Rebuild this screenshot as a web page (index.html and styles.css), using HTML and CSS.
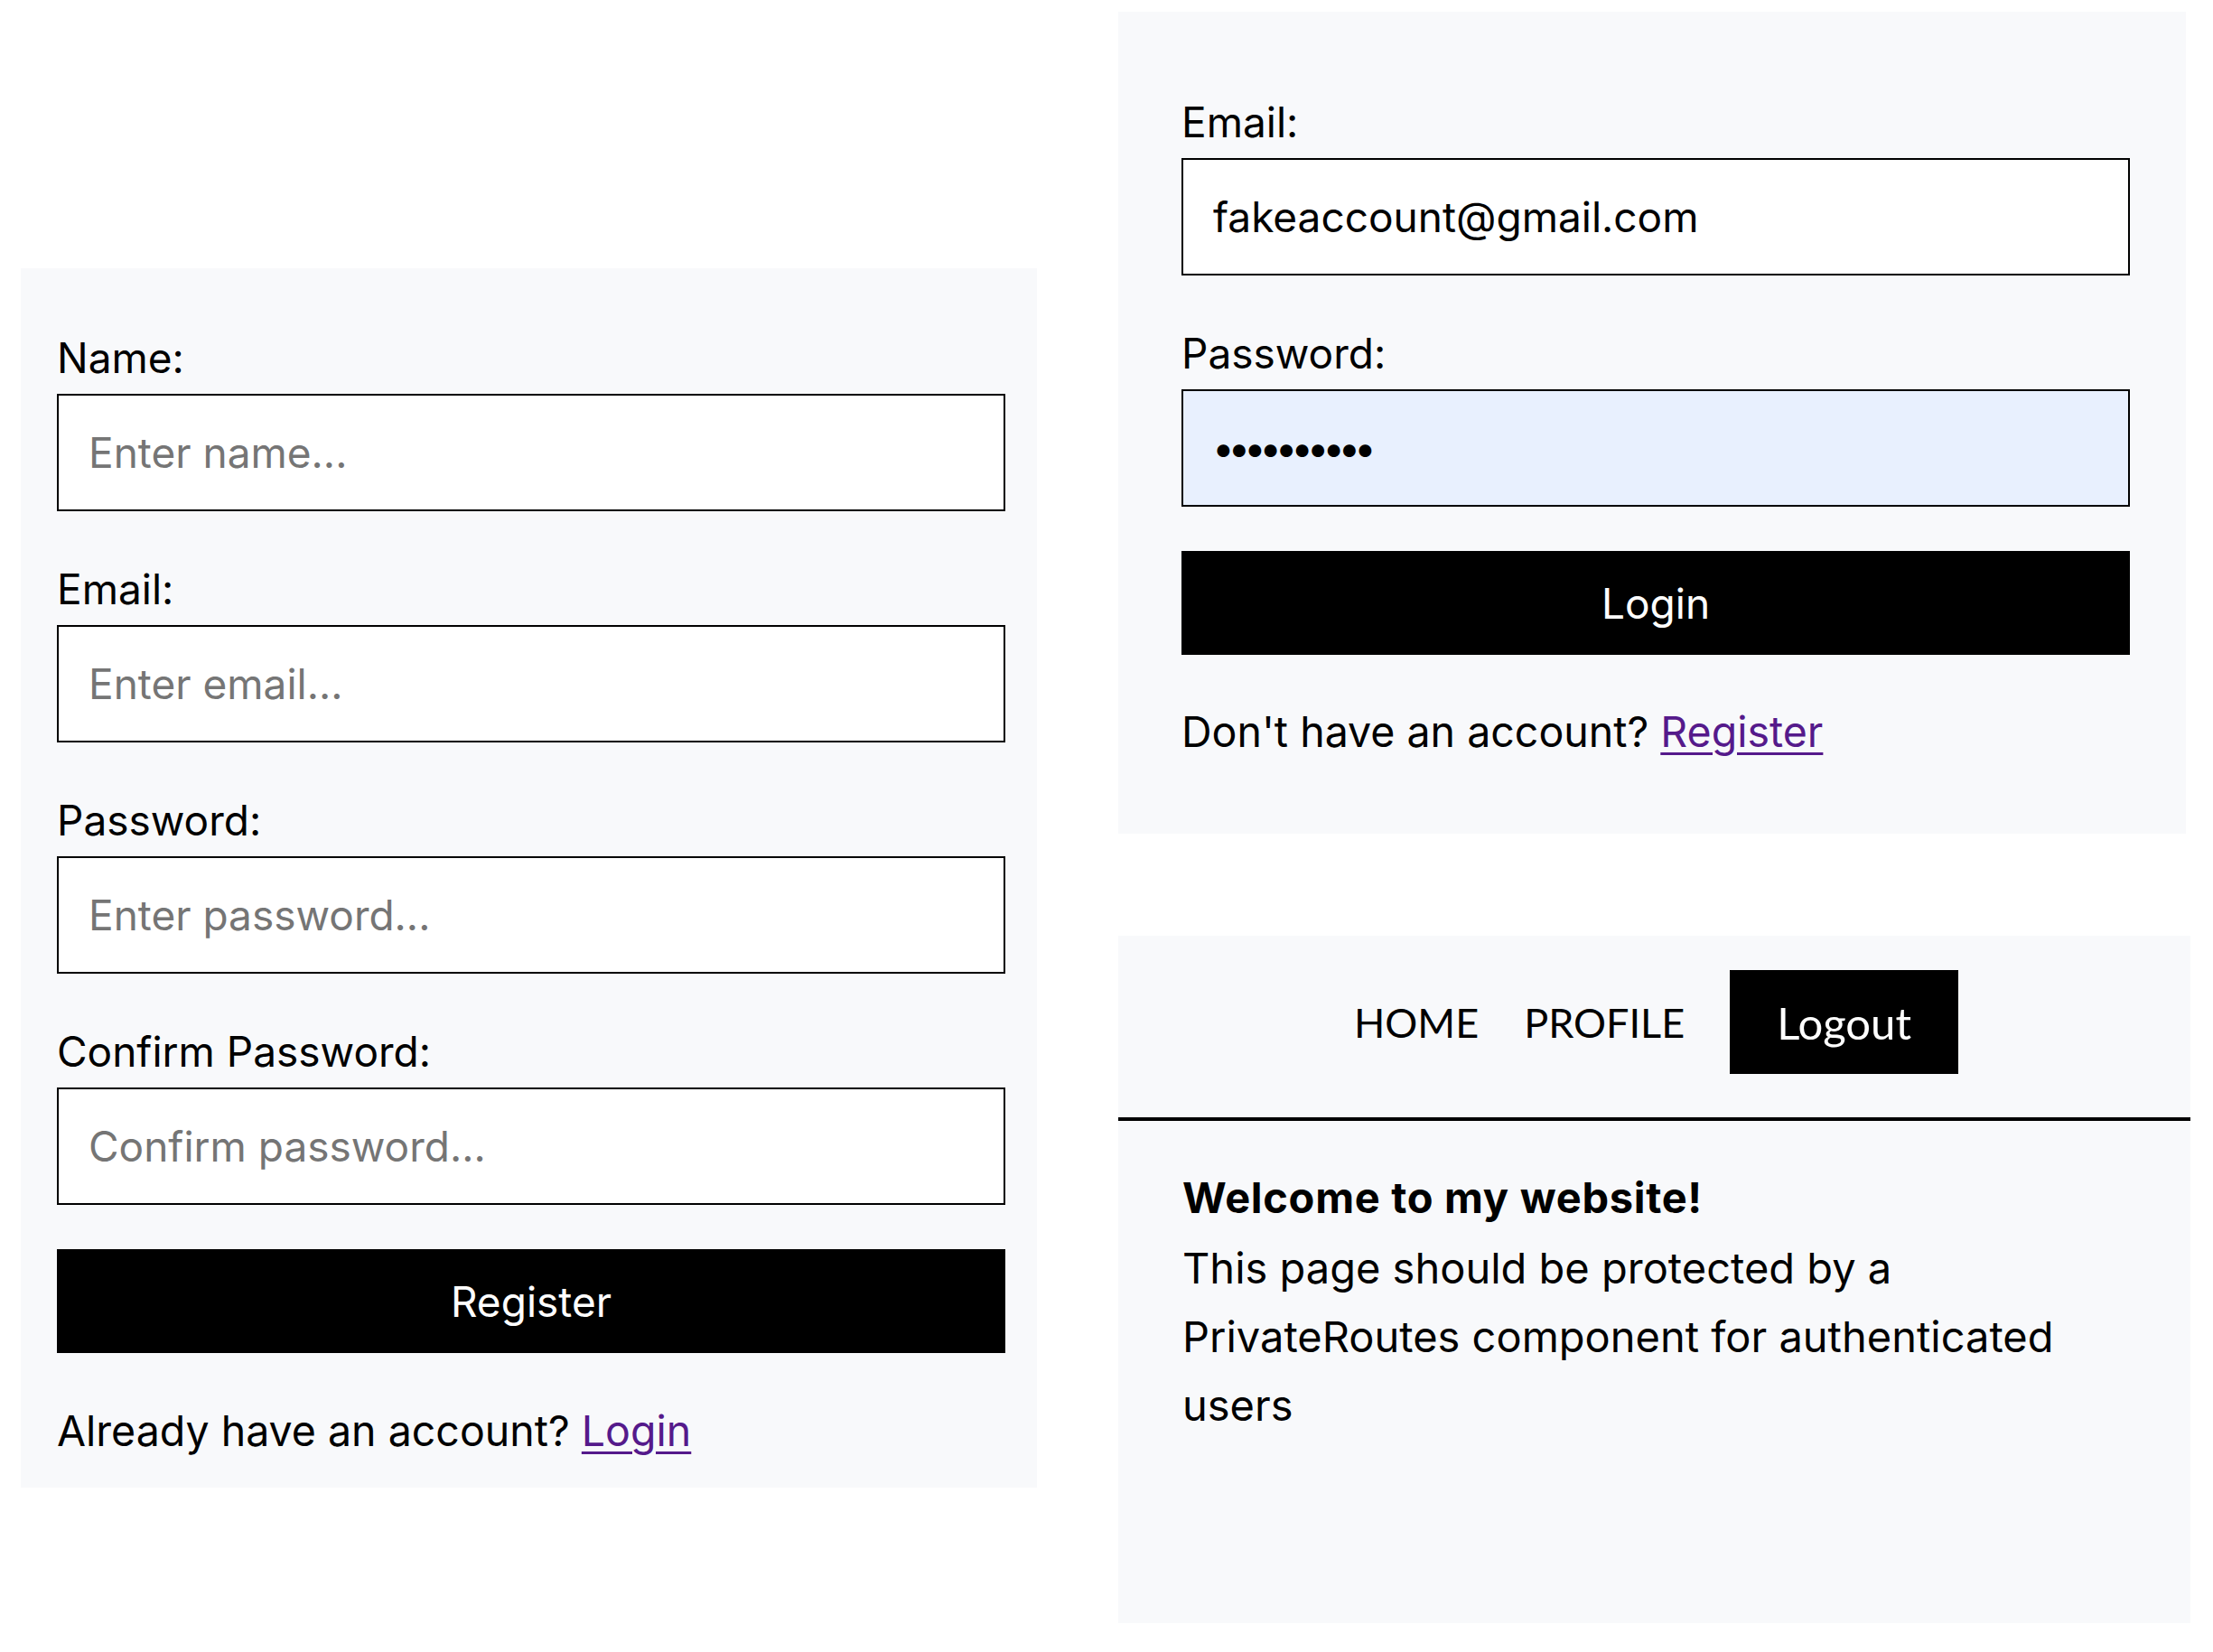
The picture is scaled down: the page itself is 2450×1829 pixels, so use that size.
FILE: index.html
```html
<!DOCTYPE html>
<html lang="en">
<head>
<meta charset="utf-8">
<title>Auth pages</title>
<link rel="stylesheet" href="styles.css">
</head>
<body>
<div class="page">
  <section class="panel panel-register">
    <form class="form">
      <div class="field">
        <label class="label" for="r-name">Name:</label>
        <input class="input" id="r-name" type="text" placeholder="Enter name...">
      </div>
      <div class="field">
        <label class="label" for="r-email">Email:</label>
        <input class="input" id="r-email" type="email" placeholder="Enter email...">
      </div>
      <div class="field">
        <label class="label" for="r-pass">Password:</label>
        <input class="input" id="r-pass" type="password" placeholder="Enter password...">
      </div>
      <div class="field">
        <label class="label" for="r-confirm">Confirm Password:</label>
        <input class="input" id="r-confirm" type="password" placeholder="Confirm password...">
      </div>
      <button class="submit" type="button">Register</button>
      <p class="switch">Already have an account? <a class="link" href="#">Login</a></p>
    </form>
  </section>

  <div class="right-col">
    <section class="panel panel-login">
      <form class="form">
        <div class="field">
          <label class="label" for="l-email">Email:</label>
          <input class="input" id="l-email" type="email" value="fakeaccount@gmail.com">
        </div>
        <div class="field">
          <label class="label" for="l-pass">Password:</label>
          <input class="input input-autofill" id="l-pass" type="password" value="password12">
        </div>
        <button class="submit" type="button">Login</button>
        <p class="switch switch-login">Don't have an account? <a class="link" href="#">Register</a></p>
      </form>
    </section>

    <section class="panel panel-home">
      <nav class="nav">
        <a class="nav-link" href="#">HOME</a>
        <a class="nav-link" href="#">PROFILE</a>
        <button class="logout" type="button">Logout</button>
      </nav>
      <div class="content">
        <p class="title">Welcome to my website!</p>
        <p class="text">This page should be protected by a PrivateRoutes component for authenticated users</p>
      </div>
    </section>
  </div>
</div>
</body>
</html>
```

FILE: styles.css
```css
* {
  box-sizing: border-box;
}

html, body {
  margin: 0;
  padding: 0;
  background: #ffffff;
}

body {
  font-family: "Inter", "Liberation Sans", sans-serif;
  font-size: 47px;
  color: #000000;
}

.page {
  display: grid;
  grid-template-columns: 1125px 1187px;
  column-gap: 90px;
  align-items: start;
  padding: 13px 0 0 23px;
}

.panel {
  background: #f8f9fb;
}

.panel-register {
  margin-top: 284px;
  padding: 71px 36px 35px 40px;
}

.right-col {
  display: flex;
  flex-direction: column;
  gap: 113px;
}

.panel-login {
  width: 1182px;
  padding: 94px 62px 85px 70px;
}

.form {
  display: flex;
  flex-direction: column;
  width: 1050px;
  margin: 0;
  font-size: 46px;
}

.field {
  display: flex;
  flex-direction: column;
  margin-bottom: 58px;
}

div.field:last-of-type {
  margin-bottom: 49px;
}

.label {
  display: block;
  line-height: 56px;
  margin-bottom: 12px;
}

.input {
  display: block;
  width: 100%;
  height: 130px;
  margin: 0;
  padding: 0 33px;
  border: 2px solid #000000;
  border-radius: 0;
  background: #ffffff;
  font: inherit;
  color: #000000;
  outline: none;
}

.input::placeholder {
  color: #757575;
  opacity: 1;
}

.input-autofill {
  background: #e8f0fe;
  font-size: 44px;
  letter-spacing: -7.3px;
  padding-left: 32px;
}

.submit {
  display: block;
  width: 100%;
  height: 115px;
  margin: 0;
  padding: 0;
  border: none;
  border-radius: 0;
  background: #000000;
  color: #ffffff;
  font: inherit;
  cursor: pointer;
}

.switch {
  margin: 58px 0 0;
  line-height: 56px;
  font-size: 46.5px;
}

.switch-login {
  margin-top: 57px;
}

.link {
  color: #551a8b;
  text-decoration: underline;
  text-decoration-thickness: 3px;
  text-underline-offset: 6px;
}

.panel-home {
  width: 1187px;
  padding-bottom: 203px;
}

.nav {
  display: flex;
  justify-content: center;
  align-items: center;
  padding: 38px 21px 48px 0;
  border-bottom: 4px solid #000000;
  font-family: "Lato", "Liberation Sans", sans-serif;
  font-size: 45px;
}

.nav-link {
  padding: 0 25px;
  color: #000000;
  text-decoration: none;
}

.logout {
  height: 115px;
  padding: 0 52px;
  margin: 0 0 0 25px;
  border: none;
  border-radius: 0;
  background: #000000;
  color: #ffffff;
  font-family: inherit;
  font-size: 49px;
  cursor: pointer;
}

.content {
  padding: 57px 71px 0 71px;
}

.title {
  margin: 0 0 12px;
  line-height: 56px;
  font-weight: 700;
  letter-spacing: 0.7px;
}

.text {
  margin: 0;
  max-width: 1000px;
  line-height: 76px;
}
```
